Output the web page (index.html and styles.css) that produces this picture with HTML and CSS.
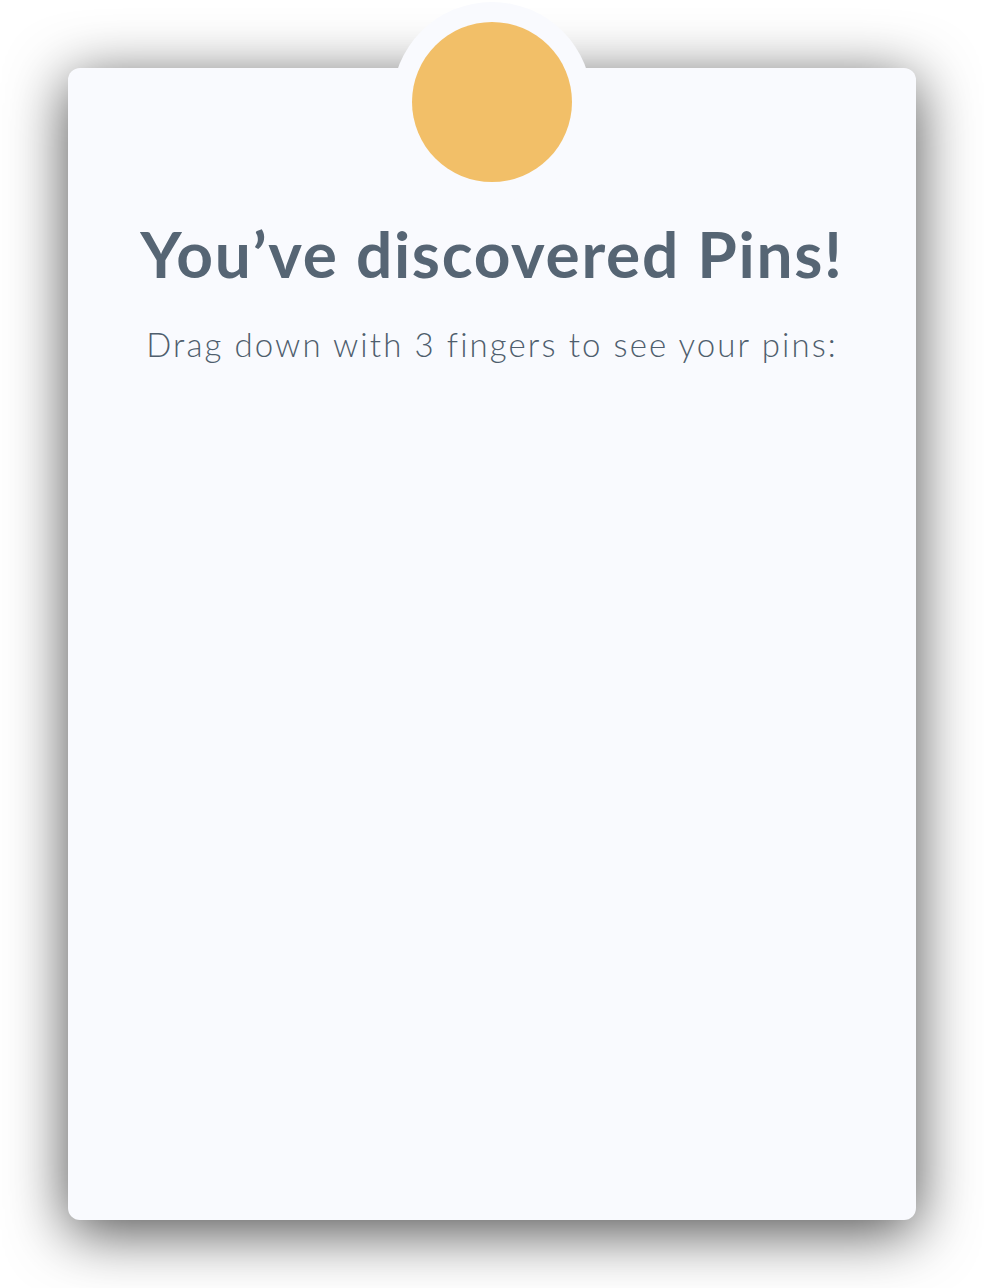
FILE: index.html
```html
<!DOCTYPE html>
<html>
<head>
<meta charset="utf-8">
<link rel="stylesheet" href="styles.css">
</head>
<body>
<div class="page">
  <div class="card">
    <div class="bump"><div class="dot"></div></div>
    <h1 class="title">You’ve discovered Pins!</h1>
    <p class="subtitle">Drag down with 3 fingers to see your pins:</p>
  </div>
</div>
</body>
</html>
```
FILE: styles.css
```css
html, body {
  margin: 0;
  padding: 0;
  background: #ffffff;
}
.page {
  width: 984px;
  height: 1288px;
  padding-top: 68px;
  box-sizing: border-box;
}
.card {
  width: 848px;
  height: 1152px;
  margin: 0 auto;
  background: #f9fafe;
  border-radius: 12px;
  box-shadow: 0 12px 60px rgba(0, 0, 0, 0.7);
  display: flex;
  flex-direction: column;
  align-items: center;
  font-family: Lato, "Open Sans", sans-serif;
  color: #566574;
}
.bump {
  margin-top: -66px;
  width: 200px;
  height: 200px;
  border-radius: 50%;
  background: #f9fafe;
  display: flex;
  align-items: center;
  justify-content: center;
  flex-shrink: 0;
}
.dot {
  width: 160px;
  height: 160px;
  border-radius: 50%;
  background: #f2bf68;
}
.title {
  margin: 14px 0 0;
  font-size: 64px;
  font-weight: 700;
  line-height: 76px;
  letter-spacing: 1.7px;
}
.subtitle {
  margin: 32px 0 0;
  font-size: 33px;
  font-weight: 300;
  line-height: 40px;
  letter-spacing: 2.1px;
  color: #4f5e6d;
}
```
